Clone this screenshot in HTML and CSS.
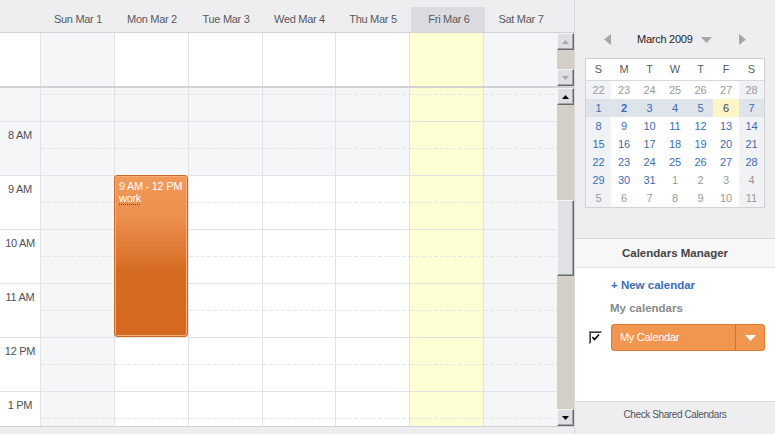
FILE: index.html
```html
<!DOCTYPE html>
<html>
<head>
<meta charset="utf-8">
<link rel="stylesheet" href="styles.css">
</head>
<body>
<div class="app">
  <div class="main">
    <div class="head">
      <div class="h-gutter"></div>
      <div class="dh">Sun Mar 1</div>
      <div class="dh">Mon Mar 2</div>
      <div class="dh">Tue Mar 3</div>
      <div class="dh">Wed Mar 4</div>
      <div class="dh">Thu Mar 5</div>
      <div class="dh today">Fri Mar 6</div>
      <div class="dh">Sat Mar 7</div>
      <div class="h-sb"></div>
    </div>

    <div class="allday">
      <div class="a-gutter"></div>
      <div class="acol we"></div>
      <div class="acol"></div>
      <div class="acol"></div>
      <div class="acol"></div>
      <div class="acol"></div>
      <div class="acol fri"></div>
      <div class="acol we"></div>
      <div class="sb">
        <div class="sbbtn"><svg width="7" height="4" viewBox="0 0 7 4"><polygon points="0,4 7,4 3.5,0" fill="#a9a8ad"/></svg></div>
        <div class="track"></div>
        <div class="sbbtn"><svg width="7" height="4" viewBox="0 0 7 4"><polygon points="0,0 7,0 3.5,4" fill="#a9a8ad"/></svg></div>
      </div>
    </div>

    <div class="body">
      <div class="viewport">
        <div class="grid">
          <div class="gcol">
            <div class="gh off"></div>
            <div class="gh off">8 AM</div>
            <div class="gh">9 AM</div>
            <div class="gh">10 AM</div>
            <div class="gh">11 AM</div>
            <div class="gh">12 PM</div>
            <div class="gh">1 PM</div>
          </div>
          <div class="dcol we">
            <div class="hr off"></div><div class="hr off"></div><div class="hr"></div><div class="hr"></div><div class="hr"></div><div class="hr"></div><div class="hr"></div>
          </div>
          <div class="dcol">
            <div class="hr off"></div><div class="hr off"></div><div class="hr"></div><div class="hr"></div><div class="hr"></div><div class="hr"></div><div class="hr"></div>
            <div class="event">
              <div>9 AM - 12 PM</div>
              <div><span class="ev-title">work</span></div>
            </div>
          </div>
          <div class="dcol">
            <div class="hr off"></div><div class="hr off"></div><div class="hr"></div><div class="hr"></div><div class="hr"></div><div class="hr"></div><div class="hr"></div>
          </div>
          <div class="dcol">
            <div class="hr off"></div><div class="hr off"></div><div class="hr"></div><div class="hr"></div><div class="hr"></div><div class="hr"></div><div class="hr"></div>
          </div>
          <div class="dcol">
            <div class="hr off"></div><div class="hr off"></div><div class="hr"></div><div class="hr"></div><div class="hr"></div><div class="hr"></div><div class="hr"></div>
          </div>
          <div class="dcol fri">
            <div class="hr off"></div><div class="hr off"></div><div class="hr"></div><div class="hr"></div><div class="hr"></div><div class="hr"></div><div class="hr"></div>
          </div>
          <div class="dcol we">
            <div class="hr off"></div><div class="hr off"></div><div class="hr"></div><div class="hr"></div><div class="hr"></div><div class="hr"></div><div class="hr"></div>
          </div>
        </div>
      </div>
      <div class="sb">
        <div class="sbbtn"><svg width="7" height="4" viewBox="0 0 7 4"><polygon points="0,4 7,4 3.5,0" fill="#000"/></svg></div>
        <div class="track"><div class="thumb"></div></div>
        <div class="sbbtn"><svg width="7" height="4" viewBox="0 0 7 4"><polygon points="0,0 7,0 3.5,4" fill="#000"/></svg></div>
      </div>
    </div>
    <div class="foot"></div>
  </div>

  <div class="panel">
    <div class="mini">
      <div class="nav">
        <svg class="nav-l" width="7" height="11" viewBox="0 0 7 11"><polygon points="7,0 7,11 0,5.5" fill="#a6a6a8"/></svg>
        <span class="month">March 2009</span>
        <svg class="nav-dd" width="11" height="6" viewBox="0 0 11 6"><polygon points="0,0 11,0 5.5,6" fill="#a6a6a8"/></svg>
        <svg class="nav-r" width="7" height="11" viewBox="0 0 7 11"><polygon points="0,0 0,11 7,5.5" fill="#a6a6a8"/></svg>
      </div>
      <div class="mcal">
        <div class="mrow mhead">
          <div>S</div><div>M</div><div>T</div><div>W</div><div>T</div><div>F</div><div>S</div>
        </div>
        <div class="mrow">
          <div class="o we">22</div><div class="o">23</div><div class="o">24</div><div class="o">25</div><div class="o">26</div><div class="o">27</div><div class="o we">28</div>
        </div>
        <div class="mrow cur">
          <div>1</div><div class="b">2</div><div>3</div><div>4</div><div>5</div><div class="sel">6</div><div>7</div>
        </div>
        <div class="mrow">
          <div class="we">8</div><div>9</div><div>10</div><div>11</div><div>12</div><div>13</div><div class="we">14</div>
        </div>
        <div class="mrow">
          <div class="we">15</div><div>16</div><div>17</div><div>18</div><div>19</div><div>20</div><div class="we">21</div>
        </div>
        <div class="mrow">
          <div class="we">22</div><div>23</div><div>24</div><div>25</div><div>26</div><div>27</div><div class="we">28</div>
        </div>
        <div class="mrow">
          <div class="we">29</div><div>30</div><div>31</div><div class="o">1</div><div class="o">2</div><div class="o">3</div><div class="o we">4</div>
        </div>
        <div class="mrow">
          <div class="o we">5</div><div class="o">6</div><div class="o">7</div><div class="o">8</div><div class="o">9</div><div class="o">10</div><div class="o we">11</div>
        </div>
      </div>
    </div>
    <div class="cm-head">Calendars Manager</div>
    <div class="cm-body">
      <div class="new-cal">+ New calendar</div>
      <div class="my-cals">My calendars</div>
      <div class="cal-row">
        <svg class="chk" width="13" height="13" viewBox="0 0 13 13">
          <rect x="0" y="0" width="13" height="13" fill="#808080"/>
          <rect x="1" y="1" width="12" height="12" fill="#fff"/>
          <rect x="1" y="1" width="11" height="11" fill="#404040"/>
          <rect x="2" y="2" width="10" height="10" fill="#fff"/>
          <polyline points="3.5,6 5.5,8.5 10,3.5" fill="none" stroke="#000" stroke-width="1.6"/>
        </svg>
        <div class="dd">
          <span class="dd-text">My Calendar</span>
          <span class="dd-btn"><svg width="11" height="6" viewBox="0 0 11 6"><polygon points="0,0 11,0 5.5,6" fill="#fff"/></svg></span>
        </div>
      </div>
    </div>
    <div class="cm-foot">Check Shared Calendars</div>
  </div>
</div>
</body>
</html>
```

FILE: styles.css
```css
* { box-sizing: border-box; }
html, body { margin: 0; padding: 0; }
body {
  width: 775px;
  height: 434px;
  overflow: hidden;
  font-family: "Liberation Sans", Arial, sans-serif;
  font-size: 11px;
  letter-spacing: -0.3px;
  color: #444;
  background: #eeeef1;
}
.app { display: flex; width: 775px; height: 434px; }

/* ---------- main calendar ---------- */
.main { width: 574px; display: flex; flex-direction: column; }

.head {
  height: 33px;
  display: grid;
  grid-template-columns: 40px 74px 74px 74px 73px 74px 74px 74px 17px;
  border-bottom: 1px solid #d2d2d6;
  background: #eeeef1;
}
.dh {
  margin-top: 7px;
  height: 25px;
  line-height: 25px;
  text-align: center;
  color: #58585c;
  padding-left: 2px;
}
.dh.today { background: #dcdce0; margin-left: 2px; margin-right: -2px; }

.allday {
  height: 55px;
  display: grid;
  grid-template-columns: 40px 74px 74px 74px 73px 74px 74px 74px 17px;
  border-bottom: 2px solid #d2d2d6;
}
.a-gutter { background: #fff; }
.acol { background: #fff; border-left: 1px solid #e2e2e6; }
.acol.we { background: #f5f6f8; }
.acol.fri { background: #ffffd4; }

.sb {
  display: flex;
  flex-direction: column;
  background: #d4d0c8;
}
.sbbtn {
  height: 17px;
  flex: none;
  background: #dfdee3;
  border: 1px solid;
  border-color: #f4f4f4 #6a6a6a #6a6a6a #f4f4f4;
  box-shadow: inset -1px -1px 0 #a4a4a8;
  display: flex;
  align-items: center;
  justify-content: center;
}
.track { flex: 1; }
.thumb {
  margin-top: 95px;
  height: 76px;
  background: #e0e0e7;
  border: 1px solid;
  border-color: #f6f6f6 #6a6a6a #6a6a6a #f6f6f6;
  box-shadow: inset -1px -1px 0 #a4a4a8;
}

.body {
  height: 338px;
  display: grid;
  grid-template-columns: 557px 17px;
}
.viewport { overflow: hidden; background: #fff; }
.grid {
  margin-top: -21px;
  display: grid;
  grid-template-columns: 40px 74px 74px 74px 73px 74px 74px 74px;
}
.gh {
  height: 54px;
  border-top: 1px solid #e2e2e6;
  text-align: center;
  padding-top: 7px;
  line-height: 13px;
  color: #505054;
  background: #fff;
}
.gh.off { background: #f5f6f8; }

.dcol { position: relative; border-left: 1px solid #e2e2e6; background: #fff; }
.hr {
  height: 54px;
  border-top: 1px solid #e2e2e6;
}
.hr::after {
  content: "";
  display: block;
  margin-top: 26px;
  height: 1px;
  background: repeating-linear-gradient(90deg, #e6e6ea 0 4px, transparent 4px 6px);
}
.hr.off { background: #f5f6f8; }
.dcol.we .hr { background: #f5f6f8; }
.dcol.fri .hr { background: #ffffd4; }

.event {
  position: absolute;
  top: 108px;
  left: -1px;
  width: 74px;
  height: 162px;
  border: 1px solid #cc6a28;
  border-radius: 3px;
  box-shadow: inset 0 0 0 1px #f6ae78;
  background: linear-gradient(#f09a5a 0%, #ec904e 25%, #de7832 48%, #d56a21 60%, #d4691f 100%);
  color: #fff;
  padding: 4px 0 0 4px;
  line-height: 12px;
}
.ev-title {
  text-decoration-line: underline;
  text-decoration-style: dotted;
  text-decoration-color: #ff0000;
  text-decoration-thickness: 1px;
  text-underline-offset: 2px;
}

.foot {
  flex: 1;
  border-top: 1px solid #d2d2d6;
  background: #eeeef1;
}

/* ---------- right panel ---------- */
.panel {
  width: 201px;
  display: flex;
  flex-direction: column;
  border-left: 1px solid #d8d8dc;
  background: #eeeef1;
}
.mini { height: 238px; padding-top: 29px; }
.nav { display: flex; align-items: center; height: 20px; }
.nav-l { margin-left: 29px; }
.month { margin-left: 26px; color: #1e1e1e; letter-spacing: -0.25px; }
.nav-dd { margin-left: 8px; margin-top: 2px; }
.nav-r { margin-left: 27px; }

.mcal {
  margin-top: 9px;
  margin-left: 10px;
  width: 180px;
  border: 1px solid #d2d2d6;
  background: #fff;
}
.mrow {
  display: grid;
  grid-template-columns: 25px 26px 25px 26px 25px 26px 25px;
  height: 18px;
  line-height: 18px;
  text-align: center;
  color: #3b6db3;
}
.mrow > div { letter-spacing: 0; }
.mrow .we { background: #f1f2f6; }
.mrow .o { color: #9a9a9a; }
.mhead {
  height: 22px;
  line-height: 21px;
  border-bottom: 1px solid #d8d8dc;
  color: #5a5a5e;
}
.mrow.cur { background: #dfe4eb; }
.mrow .b { font-weight: bold; }
.mrow .sel { background: #fff5c6; color: #444; }

.cm-head {
  height: 30px;
  border-top: 1px solid #d6d6da;
  border-bottom: 1px solid #e0e0e4;
  background: #f7f7f7;
  text-align: center;
  line-height: 28px;
  font-weight: bold;
  font-size: 11.5px;
  letter-spacing: 0;
  color: #444;
}
.cm-body {
  height: 133px;
  background: #fff;
  padding-top: 10px;
}
.new-cal {
  padding-left: 36px;
  font-weight: bold;
  font-size: 11.5px;
  letter-spacing: 0;
  line-height: 14px;
  color: #3b6db3;
}
.my-cals {
  margin-top: 9px;
  padding-left: 35px;
  font-weight: bold;
  font-size: 11.5px;
  letter-spacing: 0;
  line-height: 14px;
  color: #8a8a8a;
}
.cal-row {
  margin-top: 9px;
  display: flex;
  align-items: center;
  padding-left: 14px;
}
.chk { flex: none; }
.dd {
  margin-left: 9px;
  width: 154px;
  height: 27px;
  display: flex;
  background: #f0964f;
  border: 1px solid #d87a33;
  border-radius: 3px;
  color: #fff;
}
.dd-text { flex: 1; padding-left: 8px; line-height: 25px; }
.dd-btn {
  width: 29px;
  border-left: 1px solid #cf7030;
  display: flex;
  align-items: center;
  justify-content: center;
}
.cm-foot {
  flex: 1;
  border-top: 1px solid #d6d6da;
  background: #eeeef1;
  text-align: center;
  font-size: 10px;
  letter-spacing: -0.4px;
  color: #555;
  padding-top: 7px;
  line-height: 12px;
}
```
